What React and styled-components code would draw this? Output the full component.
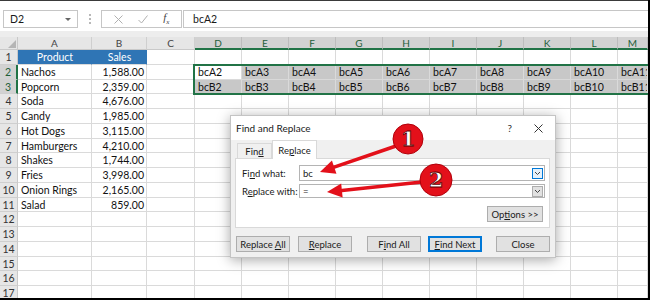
import styled, { createGlobalStyle } from 'styled-components';

const GlobalStyle = createGlobalStyle`
  body { margin: 0; background: #000; }
`;

const products = [
    ['Nachos', '1,588.00'], ['Popcorn', '2,359.00'], ['Soda', '4,676.00'],
    ['Candy', '1,985.00'], ['Hot Dogs', '3,115.00'], ['Hamburgers', '4,210.00'],
    ['Shakes', '1,744.00'], ['Fries', '3,998.00'], ['Onion Rings', '2,165.00'],
    ['Salad', '859.00'],
];
const columns = ['A', 'B', 'C', 'D', 'E', 'F', 'G', 'H', 'I', 'J', 'K', 'L', 'M'];
const GREEN = '#217346';

const Frame = styled.div`
    position: relative;
    width: 648px;
    height: 298px;
    background: #fff;
    overflow: hidden;
    font-family: Lato, "Liberation Sans", sans-serif;
    color: #1a1a1a;
`;

const TopEdge = styled.div`
    height: 1px;
    background: #3a3a3a;
`;

const FormulaBar = styled.div`
    display: flex;
    align-items: flex-start;
    height: 36px;
    box-sizing: border-box;
    padding: 9px 0 0 3px;
    border-bottom: 6px solid #ededed;
`;

const Box = styled.div`
    display: flex;
    align-items: center;
    height: 18px;
    box-sizing: border-box;
    border: 1px solid #c6c6c6;
    background: #fff;
    font-size: 10.5px;
`;

const NameBox = styled(Box)`
    width: 75px;
    padding: 0 6px;
    justify-content: space-between;
`;

const Caret = styled.span`
    width: 0;
    height: 0;
    border-left: 3px solid transparent;
    border-right: 3px solid transparent;
    border-top: 3px solid #666;
`;

const Grip = styled.div`
    display: flex;
    flex-direction: column;
    gap: 2px;
    margin: 4px 10px 0 11px;
    span { width: 2px; height: 2px; background: #b8b8b8; }
`;

const FxBox = styled(Box)`
    width: 81px;
    justify-content: space-around;
    padding: 0 4px;
    margin-right: 1px;
`;

const Fx = styled.span`
    font-family: "Liberation Serif", serif;
    font-style: italic;
    font-size: 11px;
    color: #444;
    sub { font-size: 7px; }
`;

const FormulaInput = styled(Box)`
    flex: 1;
    padding-left: 9px;
    border-right: none;
`;

const Sheet = styled.div`
    position: relative;
    display: grid;
    grid-template-columns: 18px 74px 55px 48px repeat(9, 47px) 1fr;
    grid-template-rows: 13px repeat(17, 14.75px);
`;

const Corner = styled.div`
    background: #e6e6e6;
    border-right: 1px solid #c9c9c9;
    border-bottom: 1px solid #c9c9c9;
    display: flex;
    align-items: flex-end;
    justify-content: flex-end;
    padding: 0 1px 1px 0;
`;

const ColHeader = styled.div`
    background: ${(p) => (p.$sel ? '#d2d2d2' : '#e6e6e6')};
    color: ${(p) => (p.$sel ? '#1f5f3a' : '#444')};
    border-right: 1px solid ${(p) => (p.$sel ? '#bdbdbd' : '#cfcfcf')};
    border-bottom: ${(p) => (p.$sel ? `2px solid ${GREEN}` : '1px solid #c9c9c9')};
    box-sizing: border-box;
    font-size: 10px;
    text-align: center;
    line-height: 13px;
`;

const RowHeader = styled.div`
    background: ${(p) => (p.$sel ? '#d2d2d2' : '#e6e6e6')};
    color: ${(p) => (p.$sel ? '#1f5f3a' : '#333')};
    border-right: ${(p) => (p.$sel ? `2px solid ${GREEN}` : '1px solid #c9c9c9')};
    border-bottom: 1px solid #cfcfcf;
    box-sizing: border-box;
    font-size: 10.5px;
    text-align: center;
    line-height: 14px;
    overflow: hidden;
`;

const Cell = styled.div`
    background: ${(p) => (p.$blue ? '#2f75b5' : p.$fill ? '#c8c8c8' : '#fff')};
    color: ${(p) => (p.$blue ? '#fff' : '#111')};
    border-right: 1px solid ${(p) => (p.$blue ? '#2f75b5' : '#dadada')};
    border-bottom: 1px solid ${(p) => (p.$fill ? '#d9d9d9' : '#dadada')};
    box-sizing: border-box;
    font-size: 10.5px;
    line-height: 14px;
    padding: 0 2px 0 3px;
    text-align: ${(p) => p.$align || 'left'};
    white-space: nowrap;
    overflow: hidden;
`;

const Selection = styled.div`
    position: absolute;
    left: 193px;
    right: -10px;
    top: 27px;
    height: 31px;
    box-sizing: border-box;
    border: 2px solid ${GREEN};
    pointer-events: none;
`;

const Dialog = styled.div`
    position: absolute;
    left: 230px;
    top: 115px;
    width: 326px;
    height: 143px;
    box-sizing: border-box;
    display: flex;
    flex-direction: column;
    background: #f0f0f0;
    border: 1px solid #c4c4c4;
    box-shadow: 0 2px 12px rgba(0, 0, 0, 0.35);
    font-size: 9.5px;
    color: #1a1a1a;
`;

const TitleBar = styled.div`
    display: flex;
    align-items: center;
    height: 24px;
    padding: 0 12px 0 5px;
    background: #fff;
    font-size: 10px;
`;

const Title = styled.span`
    flex: 1;
`;

const TitleTool = styled.span`
    margin-left: 22px;
    display: flex;
    align-items: center;
    font-size: 10px;
    color: #333;
`;

const DialogBody = styled.div`
    display: flex;
    flex-direction: column;
    padding: 0 5px 0 4px;
`;

const Tabs = styled.div`
    display: flex;
    align-items: flex-end;
    height: 18px;
    padding-left: 2px;
`;

const Tab = styled.div`
    height: ${(p) => (p.$active ? '19px' : '15px')};
    width: ${(p) => (p.$active ? '45px' : '35px')};
    box-sizing: border-box;
    border: 1px solid #d9d9d9;
    border-bottom: none;
    background: ${(p) => (p.$active ? '#fff' : '#f0f0f0')};
    margin-bottom: ${(p) => (p.$active ? '-1px' : '0')};
    position: relative;
    z-index: 1;
    display: flex;
    align-items: center;
    justify-content: center;
    font-size: 9.5px;
`;

const Panel = styled.div`
    height: 70px;
    box-sizing: border-box;
    background: #fff;
    border: 1px solid #d9d9d9;
    padding: 6px 4px 0 6px;
    display: flex;
    flex-direction: column;
`;

const FieldRow = styled.div`
    display: flex;
    align-items: center;
    height: ${(p) => (p.$tall ? '16px' : '14px')};
    margin-top: ${(p) => p.$mt || 0}px;
`;

const Label = styled.span`
    width: 57px;
`;

const Combo = styled.div`
    flex: 1;
    height: 100%;
    box-sizing: border-box;
    border: 1px solid #b4b4b4;
    display: flex;
    align-items: center;
    justify-content: space-between;
    padding: 0 1px 0 3px;
    font-size: 9.5px;
`;

const DropButton = styled.span`
    width: 11px;
    height: 11px;
    box-sizing: border-box;
    border: 1px solid ${(p) => (p.$focus ? '#0078d7' : '#adadad')};
    background: ${(p) => (p.$focus ? '#e5f1fb' : '#e1e1e1')};
    display: flex;
    align-items: center;
    justify-content: center;
`;

const OptionsRow = styled.div`
    display: flex;
    justify-content: flex-end;
    margin-top: 8px;
    padding-right: 2px;
`;

const Button = styled.div`
    width: ${(p) => p.$w || 54}px;
    height: 16px;
    box-sizing: border-box;
    margin-left: ${(p) => p.$gap || 0}px;
    border: 1px solid ${(p) => (p.$default ? '#0078d7' : '#adadad')};
    box-shadow: ${(p) => (p.$default ? 'inset 0 0 0 1px #0078d7' : 'none')};
    background: #e1e1e1;
    display: flex;
    align-items: center;
    justify-content: center;
    font-size: 9.5px;
    white-space: pre;
`;

const ButtonRow = styled.div`
    display: flex;
    margin-top: 8px;
    padding-left: 1px;
`;

const Annotations = styled.svg`
    position: absolute;
    left: 0;
    top: 0;
    pointer-events: none;
`;

function Chevron() {
    return (
        <svg width="7" height="5" viewBox="0 0 7 5">
            <path d="M1 1l2.5 2.5L6 1" fill="none" stroke="#444" strokeWidth="1" />
        </svg>
    );
}

function Marker({ cx, cy, r, n }) {
    return (
        <g>
            <circle cx={cx} cy={cy} r={r} fill="#e3101a" stroke="#b0000a" strokeWidth="1" />
            <text
                x={cx}
                y={cy + 7}
                textAnchor="middle"
                fontFamily="'DejaVu Serif', serif"
                fontWeight="bold"
                fontSize="21"
                fill="#fff"
                stroke="#5a0000"
                strokeWidth="0.8"
            >
                {n}
            </text>
        </g>
    );
}

function Arrow({ x1, y1, x2, y2 }) {
    const len = Math.hypot(x1 - x2, y1 - y2);
    const ux = (x1 - x2) / len;
    const uy = (y1 - y2) / len;
    const bx = x2 + ux * 15;
    const by = y2 + uy * 15;
    const px = -uy * 7;
    const py = ux * 7;
    return (
        <g fill="#e3101a">
            <line x1={x1} y1={y1} x2={bx} y2={by} stroke="#e3101a" strokeWidth="3.5" strokeLinecap="round" />
            <polygon points={`${x2},${y2} ${bx + px},${by + py} ${bx - px},${by - py}`} />
        </g>
    );
}

function SheetGrid() {
    const cells = [];
    cells.push(
        <Corner key="corner">
            <svg width="8" height="8" viewBox="0 0 8 8">
                <path d="M8 0V8H0Z" fill="#b5b5b5" />
            </svg>
        </Corner>,
    );
    columns.forEach((c, ci) => {
        cells.push(<ColHeader key={c} $sel={ci >= 3}>{c}</ColHeader>);
    });
    for (let r = 1; r <= 17; r += 1) {
        cells.push(<RowHeader key={`r${r}`} $sel={r === 2 || r === 3}>{r}</RowHeader>);
        columns.forEach((c, ci) => {
            let text = '';
            let align = 'left';
            const blue = r === 1 && ci < 2;
            if (blue) {
                text = ci === 0 ? 'Product' : 'Sales';
                align = 'center';
            } else if (r >= 2 && r <= 11 && ci < 2) {
                text = products[r - 2][ci];
                align = ci === 1 ? 'right' : 'left';
            } else if ((r === 2 || r === 3) && ci >= 3) {
                text = `bc${r === 2 ? 'A' : 'B'}${ci - 1}`;
            }
            const fill = (r === 2 || r === 3) && ci >= 3 && !(r === 2 && ci === 3);
            cells.push(
                <Cell key={`${c}${r}`} $blue={blue} $fill={fill} $align={align}>
                    {text}
                </Cell>,
            );
        });
    }
    return (
        <Sheet>
            {cells}
            <Selection />
        </Sheet>
    );
}

function FindReplace() {
    return (
        <Dialog>
            <TitleBar>
                <Title>Find and Replace</Title>
                <TitleTool>?</TitleTool>
                <TitleTool>
                    <svg width="9" height="9" viewBox="0 0 9 9">
                        <path d="M0.5 0.5l8 8M8.5 0.5l-8 8" stroke="#333" strokeWidth="1" />
                    </svg>
                </TitleTool>
            </TitleBar>
            <DialogBody>
                <Tabs>
                    <Tab><span>Fin<u>d</u></span></Tab>
                    <Tab $active><span>Re<u>p</u>lace</span></Tab>
                </Tabs>
                <Panel>
                    <FieldRow $tall>
                        <Label>Fi<u>n</u>d what:</Label>
                        <Combo>
                            <span>bc</span>
                            <DropButton $focus><Chevron /></DropButton>
                        </Combo>
                    </FieldRow>
                    <FieldRow $mt={3}>
                        <Label>R<u>e</u>place with:</Label>
                        <Combo>
                            <span>=</span>
                            <DropButton><Chevron /></DropButton>
                        </Combo>
                    </FieldRow>
                    <OptionsRow>
                        <Button $w={56}><span>Op<u>t</u>ions &gt;&gt;</span></Button>
                    </OptionsRow>
                </Panel>
                <ButtonRow>
                    <Button><span>Replace <u>A</u>ll</span></Button>
                    <Button $gap={8}><span><u>R</u>eplace</span></Button>
                    <Button $gap={15}><span>F<u>i</u>nd All</span></Button>
                    <Button $gap={7} $default><span><u>F</u>ind Next</span></Button>
                    <Button $gap={14}><span>Close</span></Button>
                </ButtonRow>
            </DialogBody>
        </Dialog>
    );
}

export default function App() {
    return (
        <Frame>
            <GlobalStyle />
            <TopEdge />
            <FormulaBar>
                <NameBox>
                    D2
                    <Caret />
                </NameBox>
                <Grip><span /><span /><span /></Grip>
                <FxBox>
                    <svg width="9" height="9" viewBox="0 0 9 9">
                        <path d="M0.5 0.5l8 8M8.5 0.5l-8 8" stroke="#b0b0b0" strokeWidth="1" />
                    </svg>
                    <svg width="10" height="9" viewBox="0 0 10 9">
                        <path d="M0.5 5l3 3L9.5 0.5" fill="none" stroke="#b0b0b0" strokeWidth="1" />
                    </svg>
                    <Fx>f<sub>x</sub></Fx>
                </FxBox>
                <FormulaInput>bcA2</FormulaInput>
            </FormulaBar>
            <SheetGrid />
            <FindReplace />
            <Annotations width="650" height="300" viewBox="0 0 650 300">
                <Arrow x1={396} y1={146} x2={320} y2={172} />
                <Arrow x1={422} y1={182} x2={327} y2={192} />
                <Marker cx={408} cy={139} r={15} n="1" />
                <Marker cx={436} cy={180} r={16} n="2" />
            </Annotations>
        </Frame>
    );
}
